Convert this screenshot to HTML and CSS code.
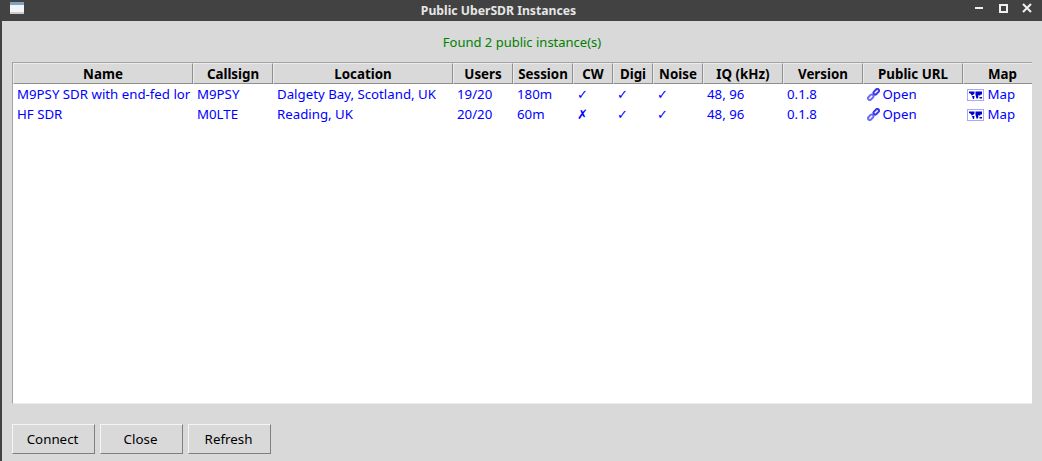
FILE: index.html
```html
<!DOCTYPE html>
<html lang="en">
<head>
    <meta charset="UTF-8">
    <title>Public UberSDR Instances</title>
    <link rel="stylesheet" href="styles.css">
</head>
<body>

    <div class="titlebar">
        <svg class="app-icon" width="14" height="14" viewBox="0 0 14 14">
            <rect x="0" y="2" width="14" height="12" fill="#f2f4f6"/>
            <rect x="0" y="2" width="14" height="3" fill="#7fa3c4"/>
            <rect x="0" y="12" width="14" height="2" fill="#c9cdd0"/>
        </svg>
        <span class="title">Public UberSDR Instances</span>
        <div class="win-buttons">
            <svg width="10" height="10" viewBox="0 0 10 10"><rect x="1" y="4" width="8" height="2" fill="#f0f0f0"/></svg>
            <svg width="10" height="10" viewBox="0 0 10 10"><rect x="2" y="2" width="7" height="7" fill="none" stroke="#f0f0f0" stroke-width="2"/></svg>
            <svg width="10" height="10" viewBox="0 0 10 10"><path d="M1 1 L9 9 M9 1 L1 9" stroke="#f0f0f0" stroke-width="2" fill="none"/></svg>
        </div>
    </div>

    <div class="window">
        <div class="status">Found 2 public instance(s)</div>

        <div class="tree">
            <table>
                <colgroup>
                    <col class="c-name"><col class="c-call"><col class="c-loc"><col class="c-users"><col class="c-session">
                    <col class="c-cw"><col class="c-digi"><col class="c-noise"><col class="c-iq"><col class="c-ver">
                    <col class="c-url"><col class="c-map">
                </colgroup>
                <thead>
                    <tr>
                        <th>Name</th><th>Callsign</th><th>Location</th><th>Users</th><th>Session</th><th>CW</th>
                        <th>Digi</th><th>Noise</th><th>IQ (kHz)</th><th>Version</th><th>Public URL</th><th>Map</th>
                    </tr>
                </thead>
                <tbody>
                    <tr>
                        <td>M9PSY SDR with end-fed lor</td><td>M9PSY</td><td>Dalgety Bay, Scotland, UK</td><td>19/20</td><td>180m</td>
                        <td>✓</td><td>✓</td><td>✓</td><td>48, 96</td><td>0.1.8</td>
                        <td>
                            <svg class="ico-link" width="13" height="13" viewBox="0 0 13 13"><g fill="none" stroke-width="2"><rect x="-2.6" y="-1.7" width="6.2" height="3.4" rx="1.7" transform="translate(3.4 9.6) rotate(-45)" stroke="#6f6ff2"/><rect x="-3.4" y="-1.7" width="6.4" height="3.4" rx="1.7" transform="translate(9.4 3.6) rotate(-45)" stroke="#3a3ae6"/></g></svg>
                            Open
                        </td>
                        <td>
                            <svg class="ico-map" width="17" height="12" viewBox="0 0 17 12"><rect x="0.5" y="0.5" width="16" height="11" fill="#fff" stroke="#a8a8f8"/><path d="M2 2.5 H7.5 V4.5 L6 6 L4.5 6.5 L4 5 L2 4 Z M5 7 H7.5 L7 10 H6 Z M8.5 2.5 H15 V5.5 H13.5 L13 7 L12 6 H8.5 Z M8.5 6 H11.5 L11 9.5 H9.5 Z M12.5 8 H15 V9.5 H12.5 Z" fill="#0000c8"/></svg>
                            Map
                        </td>
                    </tr>
                    <tr>
                        <td>HF SDR</td><td>M0LTE</td><td>Reading, UK</td><td>20/20</td><td>60m</td>
                        <td>✗</td><td>✓</td><td>✓</td><td>48, 96</td><td>0.1.8</td>
                        <td>
                            <svg class="ico-link" width="13" height="13" viewBox="0 0 13 13"><g fill="none" stroke-width="2"><rect x="-2.6" y="-1.7" width="6.2" height="3.4" rx="1.7" transform="translate(3.4 9.6) rotate(-45)" stroke="#6f6ff2"/><rect x="-3.4" y="-1.7" width="6.4" height="3.4" rx="1.7" transform="translate(9.4 3.6) rotate(-45)" stroke="#3a3ae6"/></g></svg>
                            Open
                        </td>
                        <td>
                            <svg class="ico-map" width="17" height="12" viewBox="0 0 17 12"><rect x="0.5" y="0.5" width="16" height="11" fill="#fff" stroke="#a8a8f8"/><path d="M2 2.5 H7.5 V4.5 L6 6 L4.5 6.5 L4 5 L2 4 Z M5 7 H7.5 L7 10 H6 Z M8.5 2.5 H15 V5.5 H13.5 L13 7 L12 6 H8.5 Z M8.5 6 H11.5 L11 9.5 H9.5 Z M12.5 8 H15 V9.5 H12.5 Z" fill="#0000c8"/></svg>
                            Map
                        </td>
                    </tr>
                </tbody>
            </table>
        </div>

        <div class="buttons">
            <button>Connect</button>
            <button>Close</button>
            <button>Refresh</button>
        </div>
    </div>

</body>
</html>
```

FILE: styles.css
```css
* {
    margin: 0;
    padding: 0;
    box-sizing: border-box;
}

html, body {
    height: 100%;
    overflow: hidden;
}

body {
    display: flex;
    flex-direction: column;
    font-family: "Noto Sans", sans-serif;
    font-size: 13px;
    background-color: #d9d9d9;
}

.titlebar {
    height: 21px;
    padding-right: 45px;
    background-color: #424242;
    display: flex;
    align-items: center;
    justify-content: center;
    position: relative;
    flex-shrink: 0;
}

.app-icon {
    position: absolute;
    left: 10px;
    top: 0;
}

.title {
    color: #e6e6e6;
    font-size: 12.2px;
    font-weight: bold;
}

.win-buttons {
    position: absolute;
    right: 10px;
    top: 3px;
    display: flex;
    gap: 14px;
}

.window {
    flex: 1;
    display: flex;
    flex-direction: column;
    padding: 0 10px 7px 10px;
    border-left: 2px solid #424242;
}

.status {
    height: 41px;
    padding-top: 11px;
    text-align: center;
    line-height: 20px;
    color: #008000;
}

.tree {
    height: 342px;
    background-color: #fff;
    border-top: 1px solid #a3a3a3;
    border-left: 1px solid #a3a3a3;
    border-bottom: 1px solid #ececec;
    overflow: hidden;
}

table {
    width: 1029px;
    table-layout: fixed;
    border-collapse: separate;
    border-spacing: 0;
}

.c-name { width: 180px; }
.c-call { width: 80px; }
.c-loc { width: 180px; }
.c-users { width: 60px; }
.c-session { width: 60px; }
.c-cw { width: 40px; }
.c-digi { width: 40px; }
.c-noise { width: 50px; }
.c-iq { width: 80px; }
.c-ver { width: 80px; }
.c-url { width: 100px; }
.c-map { width: 79px; }

th {
    height: 21px;
    padding: 1px 0 0;
    font-size: 13.33px;
    font-weight: bold;
    line-height: 18px;
    color: #000;
    background-color: #d9d9d9;
    border-top: 1px solid #ececec;
    border-left: 1px solid #ececec;
    border-right: 1px solid #8e8e8e;
    border-bottom: 1px solid #8e8e8e;
    white-space: nowrap;
    overflow: hidden;
}

td {
    height: 20px;
    padding: 0 0 0 4px;
    font-size: 13.25px;
    line-height: 20px;
    color: #0000ff;
    white-space: nowrap;
    overflow: hidden;
}

td svg {
    vertical-align: -2px;
}

.ico-link {
    margin-right: -1px;
}

.buttons {
    display: flex;
    gap: 5px;
    margin-top: 20px;
}

button {
    width: 83px;
    height: 30px;
    padding-right: 2px;
    font-family: "Noto Sans", sans-serif;
    font-size: 13.33px;
    color: #000;
    background-color: #d9d9d9;
    border-top: 1px solid #f5f5f5;
    border-left: 1px solid #f5f5f5;
    border-right: 1px solid #7f7f7f;
    border-bottom: 1px solid #7f7f7f;
}
```
